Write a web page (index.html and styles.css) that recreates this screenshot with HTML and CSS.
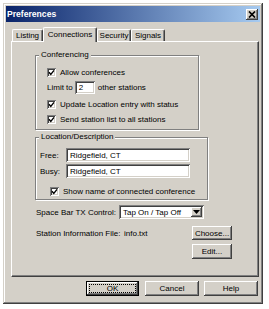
FILE: index.html
```html
<!DOCTYPE html>
<html lang="en">
<head>
    <meta charset="UTF-8">
    <title>Preferences</title>
    <link rel="stylesheet" href="styles.css">
</head>
<body>

<div class="window">
    <div class="titlebar">
        <span class="title">Preferences</span>
        <span class="close">
            <svg width="8" height="7" viewBox="0 0 8 7"><path d="M1 0.5 L7 6.5 M7 0.5 L1 6.5" stroke="#000" stroke-width="1.7" fill="none"/></svg>
        </span>
    </div>

    <div class="tabs">
        <div class="tab tab-listing">Listing</div>
        <div class="tab tab-connections active">Connections</div>
        <div class="tab tab-security">Security</div>
        <div class="tab tab-signals">Signals</div>
    </div>

    <div class="panel">
        <fieldset class="group conf">
            <legend>Conferencing</legend>
            <div class="row in-conf first">
                <span class="check"><svg width="9" height="9" viewBox="0 0 9 9"><path d="M2 4.3 L3.8 6.4 L7 2.4" stroke="#000" stroke-width="1.4" fill="none"/></svg></span>
                <span>Allow conferences</span>
            </div>
            <div class="row in-conf limit">
                <span>Limit to</span>
                <span class="field small">2</span>
                <span>other stations</span>
            </div>
            <div class="row in-conf third">
                <span class="check"><svg width="9" height="9" viewBox="0 0 9 9"><path d="M2 4.3 L3.8 6.4 L7 2.4" stroke="#000" stroke-width="1.4" fill="none"/></svg></span>
                <span>Update Location entry with status</span>
            </div>
            <div class="row in-conf fourth">
                <span class="check"><svg width="9" height="9" viewBox="0 0 9 9"><path d="M2 4.3 L3.8 6.4 L7 2.4" stroke="#000" stroke-width="1.4" fill="none"/></svg></span>
                <span>Send station list to all stations</span>
            </div>
        </fieldset>

        <fieldset class="group loc">
            <legend>Location/Description</legend>
            <div class="row text-row free">
                <span class="lbl">Free:</span>
                <span class="field wide">Ridgefield, CT</span>
            </div>
            <div class="row text-row busy">
                <span class="lbl">Busy:</span>
                <span class="field wide">Ridgefield, CT</span>
            </div>
            <div class="row show-name">
                <span class="check"><svg width="9" height="9" viewBox="0 0 9 9"><path d="M2 4.3 L3.8 6.4 L7 2.4" stroke="#000" stroke-width="1.4" fill="none"/></svg></span>
                <span>Show name of connected conference</span>
            </div>
        </fieldset>

        <div class="row opt-row spacebar">
            <span class="opt-lbl">Space Bar TX Control:</span>
            <div class="select">
                <span class="select-text">Tap On / Tap Off</span>
                <span class="select-btn">
                    <svg width="7" height="4" viewBox="0 0 7 4"><path d="M0 0 H7 L3.5 4 Z" fill="#000"/></svg>
                </span>
            </div>
        </div>

        <div class="row opt-row station">
            <span class="opt-lbl wide-lbl">Station Information File:</span>
            <span class="file-name">info.txt</span>
            <span class="btn side-btn">Choose...</span>
        </div>

        <div class="row edit-row">
            <span class="btn side-btn">Edit...</span>
        </div>
    </div>

    <div class="buttons">
        <span class="btn default ok"><span class="focus">OK</span></span>
        <span class="btn cancel">Cancel</span>
        <span class="btn help">Help</span>
    </div>
</div>

</body>
</html>
```

FILE: styles.css
```css
body {
    margin: 0;
    background-color: #fff;
    font-family: "Liberation Sans", Arial, sans-serif;
    font-size: 8px;
    color: #000;
}

.window {
    margin: 3px 0 0 3px;
    width: 260px;
    height: 301px;
    box-sizing: border-box;
    padding: 3px;
    background-color: #d4d0c8;
    box-shadow: inset -1px -1px #404040, inset 1px 1px #d4d0c8, inset -2px -2px #808080, inset 2px 2px #fff;
    display: flex;
    flex-direction: column;
}

.titlebar {
    flex: none;
    height: 16px;
    display: flex;
    align-items: center;
    justify-content: space-between;
    padding: 0 2px 0 1px;
    background: linear-gradient(to right, #0a246a, #a6caf0);
}

.title {
    color: #fff;
    font-weight: bold;
    font-size: 8.6px;
}

.close {
    width: 12px;
    height: 11px;
    display: flex;
    align-items: center;
    justify-content: center;
    background-color: #d4d0c8;
    box-shadow: inset -1px -1px #404040, inset 1px 1px #fff, inset -2px -2px #808080;
}

/* tabs */
.tabs {
    flex: none;
    display: flex;
    align-items: flex-end;
    height: 14px;
    margin: 5px 0 0 6px;
    position: relative;
    z-index: 1;
}

.tab {
    height: 12px;
    box-sizing: border-box;
    display: flex;
    align-items: center;
    justify-content: center;
    border: 1px solid #fff;
    border-right-color: #404040;
    border-bottom: none;
    border-radius: 2px 2px 0 0;
    box-shadow: inset -1px 0 #808080;
    white-space: nowrap;
}

.tab-listing { width: 31px; }
.tab-connections { width: 54px; }
.tab-security { width: 34px; }
.tab-signals { width: 34px; }

.tab.active {
    height: 15px;
    margin-bottom: -1px;
    padding-bottom: 2px;
    background-color: #d4d0c8;
}

.panel {
    flex: none;
    margin-left: 5px;
    width: 248px;
    height: 236px;
    box-sizing: border-box;
    border: 1px solid #fff;
    border-right-color: #404040;
    border-bottom-color: #404040;
    box-shadow: inset -1px -1px #808080;
    padding-left: 23px;
    display: flex;
    flex-direction: column;
    align-items: flex-start;
}

/* group boxes */
.group {
    margin: 0;
    padding: 0 0 3px;
    min-width: 0;
    box-sizing: border-box;
    border: 1px solid #808080;
    box-shadow: inset 1px 1px #fff, 1px 1px #fff;
    display: flex;
    flex-direction: column;
    align-items: flex-start;
}

.group legend {
    margin-left: 3px;
    padding: 0 2px;
    line-height: 10px;
    background-color: #d4d0c8;
}

.conf {
    margin-top: 8px;
    width: 164px;
}

.loc {
    margin-top: 2px;
    width: 173px;
    padding-bottom: 1px;
}

.row {
    display: flex;
    align-items: center;
    height: 14px;
    white-space: nowrap;
}

.in-conf { margin-left: 11px; }
.first { margin-top: 5px; }
.limit { margin-top: 1px; height: 15px; }
.third { margin-top: 2px; }
.fourth { margin-top: 1px; }

.check {
    width: 9px;
    height: 9px;
    margin-right: 4px;
    display: flex;
    background-color: #fff;
    box-shadow: inset 1px 1px #808080, inset -1px -1px #fff, inset 2px 2px #404040, inset -2px -2px #d4d0c8;
}

.field {
    height: 14px;
    box-sizing: border-box;
    display: flex;
    align-items: center;
    padding-left: 4px;
    background-color: #fff;
    box-shadow: inset 1px 1px #808080, inset -1px -1px #fff, inset 2px 2px #404040, inset -2px -2px #d4d0c8;
}

.field.small {
    width: 20px;
    height: 13px;
    margin: 0 3px 0 2px;
}

.field.wide {
    width: 124px;
}

.text-row .lbl {
    width: 26px;
    margin-left: 4px;
}

.free { margin-top: 6px; }
.busy { margin-top: 2px; }

.show-name {
    margin: 6px 0 0 14px;
}

/* options below the groups */
.opt-lbl {
    width: 83px;
    margin-left: 1px;
}

.opt-lbl.wide-lbl { width: 88px; }

.spacebar { margin-top: 5px; }

.select {
    width: 85px;
    height: 14px;
    box-sizing: border-box;
    padding: 2px;
    display: flex;
    align-items: center;
    background-color: #fff;
    box-shadow: inset 1px 1px #808080, inset -1px -1px #fff, inset 2px 2px #404040, inset -2px -2px #d4d0c8;
}

.select-text {
    flex: 1;
    padding-left: 2px;
}

.select-btn {
    width: 11px;
    height: 10px;
    display: flex;
    align-items: center;
    justify-content: center;
    background-color: #d4d0c8;
    box-shadow: inset -1px -1px #404040, inset 1px 1px #fff, inset -2px -2px #808080;
}

.station {
    margin-top: 7px;
}

.file-name {
    width: 68px;
}

.btn {
    height: 15px;
    box-sizing: border-box;
    display: flex;
    align-items: center;
    justify-content: center;
    background-color: #d4d0c8;
    box-shadow: inset -1px -1px #404040, inset 1px 1px #fff, inset -2px -2px #808080;
}

.side-btn {
    width: 40px;
    height: 14px;
}

.edit-row {
    margin: 4px 0 0 157px;
    height: 15px;
}

.edit-row .side-btn { height: 15px; }

/* dialog buttons */
.buttons {
    flex: none;
    display: flex;
    justify-content: flex-end;
    margin-top: 4px;
    padding-right: 2px;
}

.buttons .btn { width: 54px; }
.buttons .ok { width: 53px; }
.buttons .cancel { margin: 0 5px 0 6px; }

.btn.default {
    border: 1px solid #000;
    padding: 2px;
}

.focus {
    flex: 1;
    align-self: stretch;
    display: flex;
    align-items: center;
    justify-content: center;
    outline: 1px dotted #000;
    outline-offset: -1px;
}
```
